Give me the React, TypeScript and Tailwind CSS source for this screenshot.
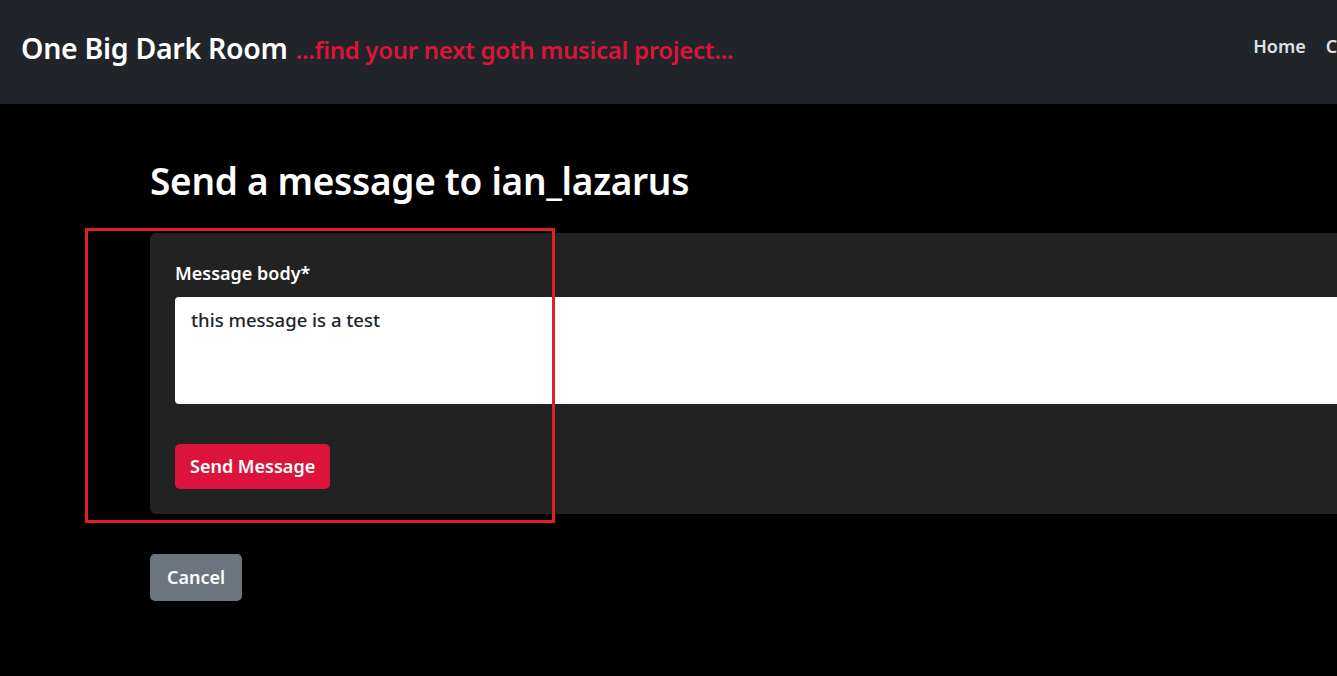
import React from "react";

export default function App() {
  return (
    <div className="relative w-full min-h-screen overflow-hidden bg-black" style={{ fontFamily: '"Noto Sans", "Open Sans", sans-serif' }}>
      <nav className="flex h-[104px] w-full items-center justify-between bg-[#212529] pb-[8px] pl-[21px]">
        <div className="flex items-baseline gap-[8px]">
          <span className="text-[28.5px] font-semibold text-white tracking-[-0.3px]">One Big Dark Room</span>
          <span className="text-[24px] font-semibold text-[#dc143c] tracking-[-0.3px]">...find your next goth musical project...</span>
        </div>
        <div className="flex shrink-0 gap-[20px] text-[18px] font-semibold text-[#dee2e6] translate-x-[57px] -translate-y-[2px]">
          <span>Home</span>
          <span>Contact</span>
        </div>
      </nav>
      <main className="pl-[150px] pt-[55px]">
        <h1 className="text-[37px] font-semibold leading-[44px] text-white tracking-[-0.3px]">Send a message to ian_lazarus</h1>
        <div className="mt-[30px] w-[1300px] rounded-[6px] bg-[#222222] px-[25px] pt-[28px] pb-[25px]">
          <label className="block text-[18px] font-semibold leading-[24px] text-white">Message body*</label>
          <div className="mt-[12px] h-[107px] w-full rounded-[4px] bg-white px-[16px] pt-[11px] text-[18.5px] font-medium leading-[24px] text-[#212529]">
            this message is a test
          </div>
          <button className="mt-[40px] h-[45px] rounded-[5px] bg-[#dc143c] px-[15px] text-[18px] font-semibold text-white">Send Message</button>
        </div>
        <button className="mt-[40px] h-[47px] rounded-[5px] bg-[#6c757d] px-[17px] text-[18px] font-semibold text-white">Cancel</button>
      </main>
      <div className="pointer-events-none absolute left-[85px] top-[228px] h-[295px] w-[470px] border-[3px] border-[#e31e24]" />
    </div>
  );
}
